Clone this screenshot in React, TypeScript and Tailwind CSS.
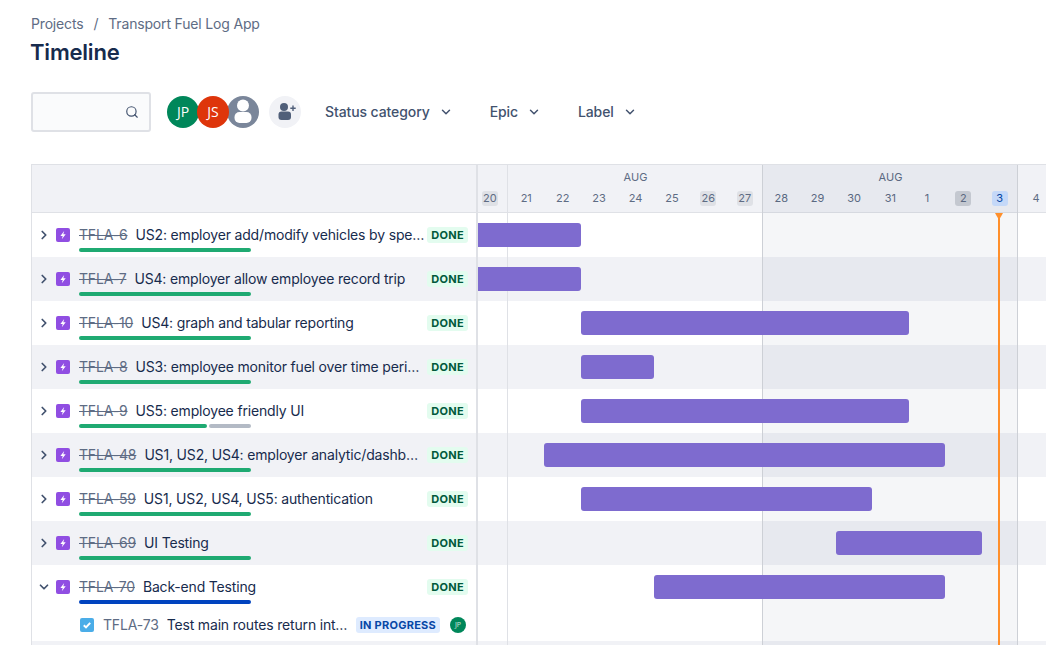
import { ChevronDown, ChevronRight, Search } from "lucide-react";

const days = [
  { label: "20", tone: "off" },
  { label: "21" },
  { label: "22" },
  { label: "23" },
  { label: "24" },
  { label: "25" },
  { label: "26", tone: "off" },
  { label: "27", tone: "off" },
  { label: "28" },
  { label: "29" },
  { label: "30" },
  { label: "31" },
  { label: "1" },
  { label: "2", tone: "offDark" },
  { label: "3", tone: "today" },
  { label: "4" },
];

const epics = [
  { id: "TFLA-6", title: "US2: employer add/modify vehicles by specific company", left: 0, width: 103 },
  { id: "TFLA-7", title: "US4: employer allow employee record trip", left: 0, width: 103 },
  { id: "TFLA-10", title: "US4: graph and tabular reporting", left: 103, width: 328 },
  { id: "TFLA-8", title: "US3: employee monitor fuel over time periods and more", left: 103, width: 73 },
  { id: "TFLA-9", title: "US5: employee friendly UI", left: 103, width: 328, partial: true },
  { id: "TFLA-48", title: "US1, US2, US4: employer analytic/dashboard for the company", left: 66, width: 401 },
  { id: "TFLA-59", title: "US1, US2, US4, US5: authentication", left: 103, width: 291 },
  { id: "TFLA-69", title: "UI Testing", left: 358, width: 146 },
  { id: "TFLA-70", title: "Back-end Testing", left: 176, width: 291, open: true },
];

function DayLabel({ label, tone }: { label: string; tone?: string }) {
  const toneClass =
    tone === "off"
      ? "bg-[#dfe1e6]"
      : tone === "offDark"
        ? "bg-[#cdd0d6]"
        : tone === "today"
          ? "bg-[#cce0ff] text-[#0747a6]"
          : "";
  return (
    <div className="flex w-[36.43px] shrink-0 justify-center">
      <span className={`flex h-[15px] min-w-[16px] items-center justify-center rounded-[3px] px-[1px] ${toneClass}`}>
        {label}
      </span>
    </div>
  );
}

function EpicIcon() {
  return (
    <svg viewBox="0 0 14 14" className="h-[14px] w-[14px] shrink-0">
      <rect width="14" height="14" rx="2" fill="#904ee2" />
      <path d="M8.200 3 4.400 8h2.300l-.9 3.200 3.900-5H7.300z" fill="#fff" />
    </svg>
  );
}

function TaskIcon() {
  return (
    <svg viewBox="0 0 14 14" className="h-[14px] w-[14px] shrink-0">
      <rect width="14" height="14" rx="2" fill="#4bade8" />
      <path d="m3.800 7.200 2.200 2.200 4.200-4.600" fill="none" stroke="#fff" strokeWidth="2" />
    </svg>
  );
}

function EpicRow({ id, title, grey, open, partial }: { id: string; title: string; grey: boolean; open?: boolean; partial?: boolean }) {
  return (
    <div className={`relative flex h-[44px] items-center pl-[4px] pr-2 ${grey ? "bg-[#f1f2f6]" : "bg-white"}`}>
      <div className="flex w-[16px] justify-center text-[#42526e]">
        {open ? <ChevronDown size={14} strokeWidth={3} /> : <ChevronRight size={14} strokeWidth={3} />}
      </div>
      <div className="ml-[4px]">
        <EpicIcon />
      </div>
      <span className="ml-[9px] shrink-0 text-[#5e6c84] line-through">{id}</span>
      <span className="mr-[2px] ml-2 min-w-0 flex-1 truncate text-[#172b4d]">{title}</span>
      <span className="shrink-0 rounded-[3px] bg-[#e3fcef] px-[4px] text-[11px] leading-[16px] font-bold tracking-[0.3px] text-[#00593b]">
        DONE
      </span>
      <div className="absolute top-[35px] left-[47px] flex h-[4px] w-[172px] gap-[2px]">
        <div className={`h-full rounded-full ${open ? "bg-[#0043bf]" : "bg-[#1faa72]"} ${partial ? "w-[128px]" : "w-full"}`} />
        {partial && <div className="h-full flex-1 rounded-full bg-[#b3bac5]" />}
      </div>
    </div>
  );
}

function TaskRow() {
  return (
    <div className="flex h-[32px] items-center pr-[10px] pl-[48px]">
      <TaskIcon />
      <span className="ml-[9px] shrink-0 text-[#5e6c84]">TFLA-73</span>
      <span className="mx-2 min-w-0 flex-1 truncate text-[#172b4d]">Test main routes return interface data</span>
      <span className="shrink-0 rounded-[3px] bg-[#deebff] px-[4px] text-[11px] leading-[16px] font-bold tracking-[0.25px] text-[#0747a6]">
        IN PROGRESS
      </span>
      <span className="ml-[10px] flex h-4 w-4 shrink-0 items-center justify-center rounded-full bg-[#00875a] font-['Open_Sans',sans-serif] text-[7px] tracking-normal text-white/80">
        JP
      </span>
    </div>
  );
}

function Toolbar() {
  return (
    <div className="mt-[24px] flex h-[40px] items-center text-[#42526e]">
      <div className="flex h-full w-[120px] items-center justify-end rounded-[3px] border-2 border-[#dfe1e6] bg-[#fafbfc] pr-[10px]">
        <Search size={14} strokeWidth={2} />
      </div>
      <div className="ml-4 flex font-['Open_Sans',sans-serif] text-[14px] font-medium tracking-normal text-white">
        <span className="flex h-8 w-8 items-center justify-center rounded-full bg-[#00875a]">JP</span>
        <span className="relative z-10 -ml-[2px] flex h-8 w-8 items-center justify-center rounded-full bg-[#de350b]">JS</span>
        <svg viewBox="0 0 32 32" className="-ml-[2px] h-8 w-8">
          <circle cx="16" cy="16" r="16" fill="#7a869a" />
          <circle cx="16" cy="9.500" r="6" fill="#fff" />
          <rect x="7.500" y="16" width="17" height="11" rx="5" fill="#fff" />
        </svg>
      </div>
      <div className="ml-[10px] flex h-8 w-8 items-center justify-center rounded-full bg-[#f1f2f6]">
        <svg viewBox="0 0 24 24" className="h-6 w-6" fill="#505f79">
          <circle cx="11" cy="7" r="4" />
          <rect x="5.500" y="11.500" width="12.500" height="8.500" rx="3" />
          <path d="M19.300 5.500h1.400v2h2v1.400h-2v2h-1.400v-2h-2V7.500h2z" />
        </svg>
      </div>
      {[
        { label: "Status category", gap: "ml-6" },
        { label: "Epic", gap: "ml-[37px]" },
        { label: "Label", gap: "ml-[37px]" },
      ].map((filter) => (
        <div key={filter.label} className={`${filter.gap} flex items-center gap-[9px] font-medium tracking-[-0.1px]`}>
          {filter.label}
          <ChevronDown size={14} strokeWidth={2.5} />
        </div>
      ))}
    </div>
  );
}

export default function App() {
  return (
    <div className="h-screen w-full overflow-hidden bg-white pt-[14px] pl-[31px] font-['Inter',sans-serif] text-[14px] leading-[20px] tracking-[-0.17px]">
      <div className="flex h-[20px] items-center text-[#5e6c84]">
        <span>Projects</span>
        <span className="mx-[10px]">/</span>
        <span>Transport Fuel Log App</span>
      </div>
      <h1 className="mt-[2px] -ml-px text-[22px] leading-[32px] font-semibold tracking-[-0.2px] text-[#172b4d]">Timeline</h1>
      <Toolbar />

      <div className="mt-[32px] flex border-t border-l border-[#dfe1e6]">
        <div className="w-[446px] shrink-0 border-r-2 border-[#dfe1e6]">
          <div className="h-[48px] border-b border-[#dfe1e6] bg-[#f1f2f6]" />
          {epics.map((epic, i) => (
            <EpicRow key={epic.id} id={epic.id} title={epic.title} grey={i % 2 === 1} open={epic.open} partial={epic.partial} />
          ))}
          <TaskRow />
          <div className="h-[44px] bg-[#f1f2f6]" />
        </div>

        <div className="relative min-w-0 flex-1 overflow-hidden">
          <div className="h-[48px] border-b border-[#dfe1e6] bg-[#f1f2f6] text-[11px] leading-[15px] tracking-normal text-[#5e6c84]">
            <div className="ml-[29px] flex h-[20px] items-end">
              <div className="w-[255px] pl-[2px] text-center">AUG</div>
              <div className="w-[255px] pl-[2px] text-center">AUG</div>
            </div>
            <div className="mt-[6px] -ml-[6.4px] flex">
              {days.map((day) => (
                <DayLabel key={day.label} label={day.label} tone={day.tone} />
              ))}
            </div>
          </div>

          {epics.map((epic, i) => (
            <div key={epic.id} className={`h-[44px] pt-[10px] ${i % 2 === 1 ? "bg-[#f1f2f6]" : "bg-white"}`}>
              <div
                className={`relative z-10 h-[24px] bg-[#7e6bcf] ${epic.left === 0 ? "rounded-r-[3px]" : "rounded-[3px]"}`}
                style={{ marginLeft: epic.left, width: epic.width }}
              />
            </div>
          ))}
          <div className="h-[32px] bg-white" />
          <div className="h-[44px] bg-[#f1f2f6]" />

          {/* week lines and the shaded week sit over the row stripes */}
          <div className="absolute top-0 bottom-0 left-[29px] w-[1px] bg-[#dfe1e6]" />
          <div className="absolute top-0 bottom-0 left-[284px] w-[256px] border-x border-[#cdd0d6] bg-[#091e420a]" />

          <div className="absolute top-[48px] bottom-0 left-[520px] z-20 w-[2px] bg-[#ff8f2b]" />
          <div className="absolute top-[48px] left-[517px] z-20 h-0 w-0 border-x-[4px] border-t-[7px] border-x-transparent border-t-[#ff8f2b]" />
        </div>
      </div>
    </div>
  );
}
